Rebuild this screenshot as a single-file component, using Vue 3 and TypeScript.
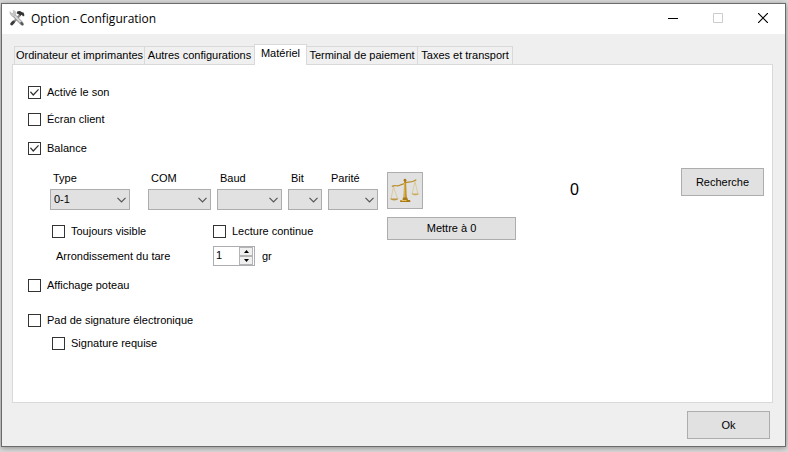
<script setup lang="ts">
import { reactive, ref } from 'vue'

interface Field {
  id: string
  label: string
  size: string
  options: string[]
}

const tabs: string[] = [
  'Ordinateur et imprimantes',
  'Autres configurations',
  'Matériel',
  'Terminal de paiement',
  'Taxes et transport',
]
const activeTab = ref<string>('Matériel')

const fields: Field[] = [
  { id: 'type', label: 'Type', size: 'type', options: ['0-1'] },
  { id: 'com', label: 'COM', size: 'com', options: [''] },
  { id: 'baud', label: 'Baud', size: 'baud', options: [''] },
  { id: 'bit', label: 'Bit', size: 'bit', options: [''] },
  { id: 'parity', label: 'Parité', size: 'parity', options: [''] },
]

const settings = reactive({
  sound: true,
  clientScreen: false,
  scale: true,
  alwaysVisible: false,
  continuous: false,
  rounding: 1,
  pole: false,
  signaturePad: false,
  signatureRequired: false,
})
const weight = ref<number>(0)

function step(delta: number): void {
  settings.rounding = Math.max(0, settings.rounding + delta)
}
</script>

<template>
  <div class="desktop">
    <div class="window">
      <header class="titlebar">
        <svg class="app-icon" viewBox="0 0 16 16" aria-hidden="true">
          <path d="M3.500 13.500 11 5" stroke="#8b8b8b" stroke-width="2.400" stroke-linecap="round" />
          <path d="M2.600 14 4.400 12" stroke="#3c3c3c" stroke-width="2.800" stroke-linecap="round" />
          <path d="M8.200 1.600c1.600-1.200 3.400-.7 4.800.6l1.500.2 1 2.900-1.400 1.200-1.300-1.700-1.600.9-1.500-1.500-2-.7z" fill="#333" />
          <path d="M4.600 5 12.800 13.500" stroke="#999" stroke-width="3.400" stroke-linecap="round" />
          <path d="M5 5.200 12.600 13.200" stroke="#d8d8d8" stroke-width="1.800" stroke-linecap="round" />
          <path d="M1 1.600 3.100 3.800 4.500 3 4.200.6C6.400.6 7.400 2.500 6.700 4.300L5.200 6.500C3.300 7 .8 5.200 1 1.600z" fill="#c8c8c8" stroke="#a4a4a4" stroke-width=".5" />
          <path d="M12.300 13 13.600 14.400" stroke="#555" stroke-width="2.200" stroke-linecap="round" />
        </svg>
        <h1>Option - Configuration</h1>
        <div class="window-buttons">
          <button type="button" aria-label="Réduire">
            <svg viewBox="0 0 10 10"><path d="M0 5.500h10" stroke="#000" /></svg>
          </button>
          <button type="button" aria-label="Agrandir" disabled>
            <svg viewBox="0 0 10 10"><path d="M.5.5h9v9h-9z" fill="none" stroke="#ccc" /></svg>
          </button>
          <button type="button" aria-label="Fermer">
            <svg viewBox="0 0 10 10"><path d="M0 0l10 10M10 0L0 10" stroke="#000" stroke-width="1.200" /></svg>
          </button>
        </div>
      </header>

      <main class="body">
        <div class="tabs" role="tablist">
          <button
            v-for="tab in tabs"
            :key="tab"
            type="button"
            role="tab"
            :aria-selected="tab === activeTab"
            :class="['tab', { active: tab === activeTab }]"
            @click="activeTab = tab"
          >{{ tab }}</button>
        </div>

        <section class="panel" role="tabpanel">
          <label class="check"><input v-model="settings.sound" type="checkbox" />Activé le son</label>
          <label class="check screen"><input v-model="settings.clientScreen" type="checkbox" />Écran client</label>
          <label class="check balance"><input v-model="settings.scale" type="checkbox" />Balance</label>

          <div class="scale">
            <div class="scale-settings">
              <div class="fields">
                <div v-for="field in fields" :key="field.id" :class="['field', field.size]">
                  <label :for="field.id">{{ field.label }}</label>
                  <div class="select">
                    <select :id="field.id">
                      <option v-for="option in field.options" :key="option">{{ option }}</option>
                    </select>
                    <svg viewBox="0 0 9 6" aria-hidden="true">
                      <path d="M.5.8l4 4 4-4" fill="none" stroke="#555" stroke-width="1.200" />
                    </svg>
                  </div>
                </div>
              </div>
              <div class="pair">
                <label class="check"><input v-model="settings.alwaysVisible" type="checkbox" />Toujours visible</label>
                <label class="check"><input v-model="settings.continuous" type="checkbox" />Lecture continue</label>
              </div>
              <div class="pair rounding">
                <label for="rounding">Arrondissement du tare</label>
                <div class="measure">
                  <div class="spinner">
                    <input id="rounding" v-model.number="settings.rounding" type="number" />
                    <div class="steps">
                      <button type="button" aria-label="Augmenter" @click="step(1)">
                        <svg viewBox="0 0 5 3"><path d="M0 3 2.500 0 5 3z" /></svg>
                      </button>
                      <button type="button" aria-label="Diminuer" @click="step(-1)">
                        <svg viewBox="0 0 5 3"><path d="M0 0h5L2.500 3z" /></svg>
                      </button>
                    </div>
                  </div>
                  <span>gr</span>
                </div>
              </div>
            </div>

            <div class="actions">
              <button type="button" class="button weigh" aria-label="Peser">
                <svg viewBox="0 0 32 32" fill="none">
                  <path d="M4.500 11.500 2 24M4.500 11.500l4 12.500M26 6.500l-3 13M26 6.500l3 13" stroke="#d8c48a" stroke-width=".8" />
                  <path d="M2.800 11.500c3-2 5 .3 8-1.200s4-1 6-2.500 5 .8 10.500-3" stroke="#b98d2c" stroke-width="1.200" />
                  <path d="M1 23.500h8.500c-1 2.600-7.500 2.600-8.500 0z" fill="#bd9540" />
                  <path d="M22.500 18.500h7.500c-1 2.400-6.500 2.400-7.500 0z" fill="#ccab5c" />
                  <path d="M15.200 6h1.800l.8 18h-3.300z" fill="#b98518" />
                  <path d="M15.800 8v15" stroke="#efcf72" stroke-width=".8" />
                  <circle cx="16" cy="5.200" r="1.400" fill="#a87a1b" />
                  <path d="M14 22.500h4.200l.8 2.500h2l.5 2H11l.5-2h2z" fill="#a97817" />
                  <path d="M12.500 25.500h5" stroke="#e6c15d" />
                </svg>
              </button>
              <button type="button" class="button zero" @click="weight = 0">Mettre à 0</button>
            </div>

            <output class="weight">{{ weight }}</output>
            <button type="button" class="button large search">Recherche</button>
          </div>

          <label class="check pole"><input v-model="settings.pole" type="checkbox" />Affichage poteau</label>
          <label class="check pad"><input v-model="settings.signaturePad" type="checkbox" />Pad de signature électronique</label>
          <label class="check required"><input v-model="settings.signatureRequired" type="checkbox" />Signature requise</label>
        </section>

        <footer class="footer">
          <button type="button" class="button large">Ok</button>
        </footer>
      </main>
    </div>
  </div>
</template>

<style>
body {
  margin: 0;
  background: #dcdcdc;
}
</style>

<style scoped>
* {
  box-sizing: border-box;
}

.desktop {
  display: flex;
  min-height: 100vh;
  padding: 3px 2px 5px 1px;
  background: #dcdcdc;
  color: #000;
  font: 11px/17px "Liberation Sans", Arial, sans-serif;
}

button,
input,
select {
  margin: 0;
  padding: 0;
  border-radius: 0;
  color: inherit;
  font: inherit;
}

svg {
  display: block;
}

.window {
  display: flex;
  flex: 1;
  flex-direction: column;
  border: 1px solid #6b6b6b;
  background: #efefef;
  box-shadow: 0 1px 6px #888;
}

.titlebar {
  display: flex;
  align-items: center;
  height: 30px;
  padding-left: 7px;
  background: #fff;
}

.app-icon {
  width: 16px;
  height: 16px;
  margin-bottom: 2px;
}

h1 {
  margin: 0 auto 0 6px;
  font: 12px/18px "Open Sans", "Noto Sans", sans-serif;
}

.window-buttons {
  display: flex;
  height: 100%;
}

.window-buttons button {
  display: grid;
  place-items: center;
  width: 45px;
  padding-bottom: 2px;
  border: 0;
  background: none;
}

.window-buttons svg {
  width: 10px;
  height: 10px;
}

.body {
  display: flex;
  flex: 1;
  flex-direction: column;
  padding: 10px 12px 7px 10px;
}

.tabs {
  display: grid;
  grid-template-columns: 130px 110px 52px 111px 95px;
  align-items: end;
  padding-left: 2px;
}

.tab {
  height: 18px;
  margin-right: -1px;
  border: 1px solid #d9d9d9;
  border-bottom: 0;
  background: #f0f0f0;
  white-space: nowrap;
}

.tab.active {
  z-index: 1;
  height: 21px;
  margin-bottom: -1px;
  padding-bottom: 3px;
  background: #fff;
}

.panel {
  display: flex;
  flex: 1;
  flex-direction: column;
  align-items: flex-start;
  padding: 19px 8px 19px 15px;
  border: 1px solid #d9d9d9;
  background: #fff;
}

.check {
  display: flex;
  align-items: center;
  gap: 6px;
}

.check input {
  display: grid;
  place-items: center;
  width: 13px;
  height: 13px;
  border: 1px solid #333;
  background: #fff;
  appearance: none;
}

.check input:checked::before {
  width: 9px;
  height: 7px;
  background: #333;
  clip-path: polygon(0 45%, 10% 33%, 36% 72%, 90% 0, 100% 12%, 36% 100%);
  content: "";
}

.screen {
  margin-top: 10px;
}

.balance {
  margin-top: 12px;
}

.scale {
  display: flex;
  align-self: stretch;
  align-items: flex-start;
  margin: 11px 0;
  padding-left: 22px;
}

.scale-settings {
  padding-top: 2px;
}

.fields {
  display: flex;
  gap: 6px;
}

.field label {
  display: block;
  padding: 0 3px 2px;
}

.select {
  display: grid;
  align-items: center;
}

.select > * {
  grid-area: 1 / 1;
}

.select select {
  width: 100%;
  height: 21px;
  padding-left: 3px;
  border: 1px solid #adadad;
  background: #e1e1e1;
  appearance: none;
}

.select svg {
  justify-self: end;
  width: 9px;
  height: 6px;
  margin-right: 4px;
  pointer-events: none;
}

.type {
  width: 80px;
  margin-right: 12px;
}

.com {
  width: 63px;
}

.baud {
  width: 65px;
}

.bit {
  width: 34px;
}

.parity {
  width: 50px;
}

.pair {
  display: grid;
  grid-template-columns: 161px auto;
  align-items: center;
  margin-top: 13px;
  padding-left: 2px;
}

.rounding {
  margin-top: 6px;
}

.rounding > label {
  padding-left: 4px;
}

.measure {
  display: flex;
  align-items: center;
  gap: 7px;
}

.spinner {
  display: flex;
  width: 42px;
  height: 20px;
  padding-right: 1px;
  border: 1px solid #abadb3;
  background: #fff;
}

.spinner input {
  width: 25px;
  padding: 0 0 2px 2px;
  border: 0;
  background: none;
  appearance: textfield;
}

.steps {
  display: grid;
  flex: 1;
  grid-template-rows: 1fr 1fr;
}

.steps button {
  display: grid;
  place-items: center;
  border: 1px solid #b4b4b4;
  background: #f0f0f0;
}

.steps svg {
  width: 5px;
  height: 3px;
}

.actions {
  display: flex;
  flex-direction: column;
  gap: 8px;
  margin-left: 9px;
  padding-top: 4px;
}

.button {
  border: 1px solid #adadad;
  background: #e1e1e1;
}

.large {
  width: 83px;
  height: 28px;
}

.weigh {
  display: grid;
  place-items: center;
  width: 36px;
  height: 37px;
}

.weigh svg {
  width: 32px;
  height: 32px;
}

.zero {
  width: 129px;
  height: 23px;
}

.weight {
  margin-left: 54px;
  padding-top: 12px;
  font-size: 16px;
  line-height: 20px;
}

.search {
  margin-left: auto;
}

.pad {
  margin-top: 18px;
}

.required {
  margin-top: 6px;
  padding-left: 24px;
}

.footer {
  display: flex;
  justify-content: flex-end;
  padding: 8px 3px 0;
}
</style>
